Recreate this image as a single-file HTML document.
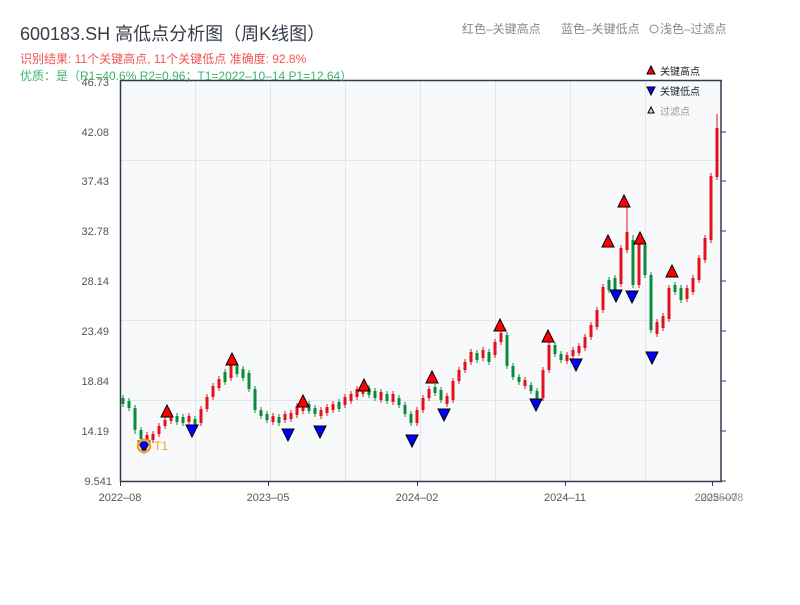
<!DOCTYPE html>
<html><head><meta charset="utf-8"><style>
body{margin:0;background:#fff;width:800px;height:600px;overflow:hidden;font-family:"Liberation Sans","Noto Sans CJK SC",sans-serif}
</style></head><body>
<svg width="800" height="600" xmlns="http://www.w3.org/2000/svg" font-family="Liberation Sans, Noto Sans CJK SC, sans-serif">
<text x="20" y="40" font-size="18" fill="#333d4a">600183.SH 高低点分析图（周K线图）</text>
<text x="20" y="63" font-size="12" fill="#ee5555">识别结果: 11个关键高点, 11个关键低点  准确度: 92.8%</text>
<text x="462" y="33" font-size="12" fill="#888">红色–关键高点</text>
<text x="561" y="33" font-size="12" fill="#888">蓝色–关键低点</text>
<circle cx="654" cy="29" r="4" fill="none" stroke="#888" stroke-width="1"/>
<text x="660" y="33" font-size="12" fill="#888">浅色–过滤点</text>
<rect x="120" y="80" width="601" height="401" fill="#f7f9fb"/>
<g stroke="#e2e5ea" stroke-width="1">
<line x1="120" y1="160.5" x2="721" y2="160.5"/><line x1="120" y1="320.5" x2="721" y2="320.5"/><line x1="120" y1="400.5" x2="721" y2="400.5"/>
<line x1="195.5" y1="80" x2="195.5" y2="481"/><line x1="270.5" y1="80" x2="270.5" y2="481"/><line x1="345.5" y1="80" x2="345.5" y2="481"/><line x1="420.5" y1="80" x2="420.5" y2="481"/><line x1="495.5" y1="80" x2="495.5" y2="481"/><line x1="570.5" y1="80" x2="570.5" y2="481"/><line x1="645.5" y1="80" x2="645.5" y2="481"/>
</g>
<path stroke="#0a8a3a" stroke-width="3" fill="none" d="M123 398V404M129 401V408M135 408V430M141 430V439M177 416V422M183 417V423M195 419V425M225 372V382M237 366V374M243 369V378M249 373V389M255 389V410M261 410V416M267 414V420M279 417V423M309 404V411M315 408V414M339 402V409M369 388V395M375 391V398M387 394V401M399 398V405M405 405V414M411 414V423M435 387V393M441 390V400M477 353V360M489 352V362M507 335V366M513 366V377M519 377V382M531 385V391M537 391V400M555 345V354M561 354V360M609 280V290M615 278V296M633 240V285M645 245V275M651 275V330M675 285V292M681 288V300"/>
<path stroke="#0a8a3a" stroke-width="1" fill="none" d="M123 395V407M129 398V411M135 405V434M141 427V442M177 413V425M183 414V426M195 416V428M225 369V385M237 363V377M243 366V381M249 370V392M255 386V413M261 407V419M267 411V423M279 414V426M309 401V414M315 405V417M339 399V412M369 385V398M375 388V401M387 391V404M399 395V408M405 402V417M411 411V426M435 384V396M441 387V403M477 350V363M489 349V365M507 332V369M513 363V380M519 374V385M531 382V394M537 388V403M555 342V357M561 351V363M609 277V293M615 275V299M633 235V288M645 242V278M651 272V333M675 282V295M681 285V303"/>
<path stroke="#e0141e" stroke-width="3" fill="none" d="M147 435V441M153 434V440M159 426V434M165 420V426M171 415V421M189 416V422M201 409V423M207 397V409M213 386V397M219 379V388M231 364V378M273 416V422M285 414V420M291 413V419M297 406V415M303 402V411M321 410V416M327 407V413M333 404V410M345 397V405M351 394V401M357 389V397M363 386V394M381 392V400M393 394V402M417 410V423M423 398V410M429 389V398M447 396V404M453 381V400M459 370V381M465 362V370M471 352V362M483 350V358M495 342V355M501 333V342M525 380V386M543 370V398M549 345V370M567 355V361M573 350V356M579 346V353M585 337V348M591 325V337M597 310V327M603 287V310M621 248V284M627 232V250M639 243V285M657 322V334M663 316V328M669 288V319M687 288V299M693 278V292M699 258V280M705 238V260M711 176V240M717 128V177"/>
<path stroke="#e0141e" stroke-width="1" fill="none" d="M147 432V444M153 431V443M159 423V437M165 417V429M171 412V424M189 413V425M201 406V426M207 394V412M213 383V400M219 376V391M231 361V381M273 413V425M285 411V423M291 410V422M297 403V418M303 399V414M321 407V419M327 404V416M333 401V413M345 394V408M351 391V404M357 386V400M363 383V397M381 389V403M393 391V405M417 407V426M423 395V413M429 386V401M447 393V407M453 378V403M459 367V384M465 359V373M471 349V365M483 347V361M495 339V358M501 330V345M525 377V389M543 367V401M549 342V373M567 352V364M573 347V359M579 343V356M585 334V351M591 322V340M597 307V330M603 284V313M621 245V287M627 205V253M639 240V288M657 319V337M663 313V331M669 285V322M687 285V302M693 275V295M699 255V283M705 235V263M711 173V243M717 114V180"/>
<g stroke="#2e3b4e" stroke-width="1.5" fill="none">
<line x1="120.5" y1="80" x2="120.5" y2="482"/><line x1="721" y1="80" x2="721" y2="482"/><line x1="120" y1="481.5" x2="722" y2="481.5"/><line x1="120" y1="80.5" x2="722" y2="80.5"/>
</g>
<g stroke="#2e3b4e" stroke-width="1">
<line x1="721" y1="132" x2="726" y2="132"/><line x1="721" y1="181" x2="726" y2="181"/><line x1="721" y1="231" x2="726" y2="231"/><line x1="721" y1="281" x2="726" y2="281"/><line x1="721" y1="331" x2="726" y2="331"/><line x1="721" y1="381" x2="726" y2="381"/><line x1="721" y1="431" x2="726" y2="431"/><line x1="721" y1="481" x2="726" y2="481"/>
<line x1="120.5" y1="481" x2="120.5" y2="486"/><line x1="268.5" y1="481" x2="268.5" y2="486"/><line x1="417.5" y1="481" x2="417.5" y2="486"/><line x1="565.5" y1="481" x2="565.5" y2="486"/><line x1="712.5" y1="481" x2="712.5" y2="486"/>
</g>
<g font-size="11" fill="#555" text-anchor="end">
<text x="109" y="86">46.73</text><text x="109" y="136">42.08</text><text x="109" y="185">37.43</text><text x="109" y="235">32.78</text><text x="109" y="285">28.14</text><text x="109" y="335">23.49</text><text x="109" y="385">18.84</text><text x="109" y="435">14.19</text><text x="112" y="485">9.541</text>
</g>
<g font-size="11" fill="#555" text-anchor="middle">
<text x="120" y="501">2022–08</text><text x="268" y="501">2023–05</text><text x="417" y="501">2024–02</text><text x="565" y="501">2024–11</text><text x="716" y="501" opacity=".8">2025–07</text><text x="722" y="501" opacity=".6">2025–08</text>
</g>
<text x="20" y="80" font-size="12" fill="#3cb371">优质：是（R1=40.6%  R2=0.96；T1=2022–10–14 P1=12.64）</text>
<g fill="red" stroke="#000" stroke-width="1">
<polygon points="167,405 161,417 173,417"/><polygon points="232,353 226,365 238,365"/><polygon points="303,395 297,407 309,407"/><polygon points="364,379 358,391 370,391"/><polygon points="432,371 426,383 438,383"/><polygon points="500,319 494,331 506,331"/><polygon points="548,330 542,342 554,342"/><polygon points="608,235 602,247 614,247"/><polygon points="624,195 618,207 630,207"/><polygon points="640,232 634,244 646,244"/><polygon points="672,265 666,277 678,277"/>
</g>
<g fill="blue" stroke="#000" stroke-width="1">
<polygon points="138,441 150,441 144,453"/><polygon points="186,425 198,425 192,437"/><polygon points="282,429 294,429 288,441"/><polygon points="314,426 326,426 320,438"/><polygon points="406,435 418,435 412,447"/><polygon points="438,409 450,409 444,421"/><polygon points="530,399 542,399 536,411"/><polygon points="570,359 582,359 576,371"/><polygon points="610,290 622,290 616,302"/><polygon points="626,291 638,291 632,303"/><polygon points="646,352 658,352 652,364"/>
</g>
<circle cx="144" cy="446" r="6" fill="none" stroke="#f5a020" stroke-width="2.5"/>
<text x="154" y="450" font-size="12" fill="#f5a020">T1</text>
<polygon points="651,66 647,74 655,74" fill="red" stroke="#000" stroke-width="1"/>
<text x="660" y="75" font-size="10" fill="#222">关键高点</text>
<polygon points="647,87 655,87 651,95" fill="blue" stroke="#000" stroke-width="1"/>
<text x="660" y="95" font-size="10" fill="#222">关键低点</text>
<polygon points="651,107 648,113 654,113" fill="#fcc" stroke="#000" stroke-width="1"/>
<text x="660" y="115" font-size="10" fill="#999">过滤点</text>
</svg>
</body></html>
